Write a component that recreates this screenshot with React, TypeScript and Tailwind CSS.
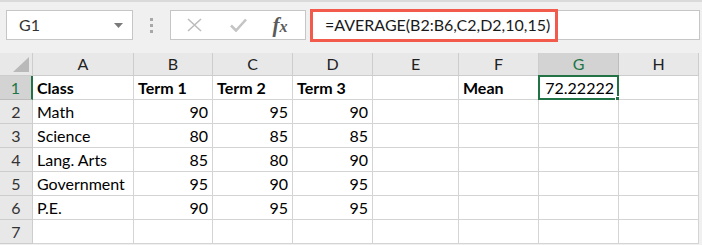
import React from "react";

type Cell = { v: string; bold?: boolean; right?: boolean };

const cols = [
  { l: "A", w: "w-[101px]" },
  { l: "B", w: "w-[79px]" },
  { l: "C", w: "w-[80px]" },
  { l: "D", w: "w-[80px]" },
  { l: "E", w: "w-[86px]" },
  { l: "F", w: "w-[80px]" },
  { l: "G", w: "w-[80px]" },
  { l: "H", w: "w-[80px]" },
];

const t = (v: string): Cell => ({ v });
const b = (v: string): Cell => ({ v, bold: true });
const n = (v: string): Cell => ({ v, right: true });
const e: Cell = { v: "" };

const rows: Cell[][] = [
  [b("Class"), b("Term 1"), b("Term 2"), b("Term 3"), e, b("Mean"), n("72.22222"), e],
  [t("Math"), n("90"), n("95"), n("90"), e, e, e, e],
  [t("Science"), n("80"), n("85"), n("85"), e, e, e, e],
  [t("Lang. Arts"), n("85"), n("80"), n("90"), e, e, e, e],
  [t("Government"), n("95"), n("90"), n("95"), e, e, e, e],
  [t("P.E."), n("90"), n("95"), n("95"), e, e, e, e],
  [e, e, e, e, e, e, e, e],
];

const App = () => {
  return (
    <div className="w-[702px] h-[245px] overflow-hidden bg-[#f0f0f0] font-['Lato',sans-serif] text-black">
      {/* formula bar */}
      <div className="h-[53px] border-t-2 border-[#dadada] flex items-start pt-[8px]">
        <div className="ml-[6px] w-[127px] h-[30px] bg-white border border-[#c6c6c6] flex items-center justify-between pl-[12px] pr-[9px]">
          <span className="text-[16px] text-[#333]">G1</span>
          <svg width="9" height="5" viewBox="0 0 9 5">
            <path d="M0 0h9L4.5 5z" fill="#7a7a7a" />
          </svg>
        </div>
        <div className="w-[37px] h-[30px] flex flex-col items-center justify-center gap-[3px]">
          <span className="w-[3px] h-[3px] bg-[#a8a8a8]" />
          <span className="w-[3px] h-[3px] bg-[#a8a8a8]" />
          <span className="w-[3px] h-[3px] bg-[#a8a8a8]" />
        </div>
        <div className="w-[136px] h-[30px] bg-white border border-[#c6c6c6] flex items-center">
          <div className="w-[46px] flex justify-center">
            <svg width="15" height="14" viewBox="0 0 15 14">
              <path d="M1 1l13 12M14 1L1 13" stroke="#bdbdbd" strokeWidth="1.6" />
            </svg>
          </div>
          <div className="w-[42px] flex justify-center">
            <svg width="17" height="14" viewBox="0 0 17 14">
              <path d="M1 7.5l5 5L16 1.5" stroke="#c4c4c4" strokeWidth="2.6" fill="none" />
            </svg>
          </div>
          <div className="w-[42px] flex justify-center">
            <span className="font-['Liberation_Serif',serif] italic font-bold text-[21px] text-[#5a5a5a] leading-none">
              f<span className="text-[16px]">x</span>
            </span>
          </div>
        </div>
        <div className="ml-[4px] w-[390px] h-[30px] bg-white border border-[#c6c6c6] flex items-center">
          <div className="-ml-px w-[248px] h-[33px] border-[3px] border-[#f25a4b] flex items-center pl-[12px] text-[16px] text-[#1a1a1a]">
            =AVERAGE(B2:B6,C2,D2,10,15)
          </div>
        </div>
      </div>

      {/* sheet */}
      <div className="flex flex-col">
        <div className="flex h-[23px]">
          <div className="w-[33px] h-full bg-[#e8e8e8] border-r border-b border-[#cdcdcd] flex items-end justify-end pr-[3px] pb-[3px]">
            <svg width="16" height="15" viewBox="0 0 16 15">
              <path d="M16 0V15H0z" fill="#b9b9b9" />
            </svg>
          </div>
          {cols.map((c) => (
            <div
              key={c.l}
              className={`${c.w} h-full border-r border-b flex items-center justify-center text-[16px] ${
                c.l === "G"
                  ? "bg-[#d3d3d3] border-[#bdbdbd] text-[#217346]"
                  : "bg-[#e8e8e8] border-[#cdcdcd] text-[#222]"
              }`}
            >
              {c.l}
            </div>
          ))}
        </div>
        {rows.map((r, ri) => (
          <div key={ri} className="flex h-[24px]">
            <div
              className={`w-[33px] h-full border-b flex items-center justify-center text-[16px] ${
                ri === 0
                  ? "bg-[#d3d3d3] border-[#bdbdbd] border-r-2 border-r-[#217346] text-[#217346]"
                  : "bg-[#e8e8e8] border-[#cdcdcd] border-r text-[#333]"
              }`}
            >
              {ri + 1}
            </div>
            {r.map((c, ci) => (
              <div
                key={ci}
                className={`${cols[ci].w} relative h-full bg-white border-r border-b border-[#d4d4d4] flex items-center px-[4px] text-[16px] whitespace-nowrap ${
                  c.right ? "justify-end" : "justify-start"
                } ${c.bold ? "font-bold" : ""}`}
              >
                {c.v}
                {ri === 0 && ci === 6 && (
                  <div className="absolute -left-px -top-px w-[81px] h-[25px] border-2 border-[#217346]">
                    <div className="absolute -right-[4px] -bottom-[4px] w-[6px] h-[6px] bg-[#217346] border border-white" />
                  </div>
                )}
              </div>
            ))}
          </div>
        ))}
      </div>
    </div>
  );
};

export default App;
